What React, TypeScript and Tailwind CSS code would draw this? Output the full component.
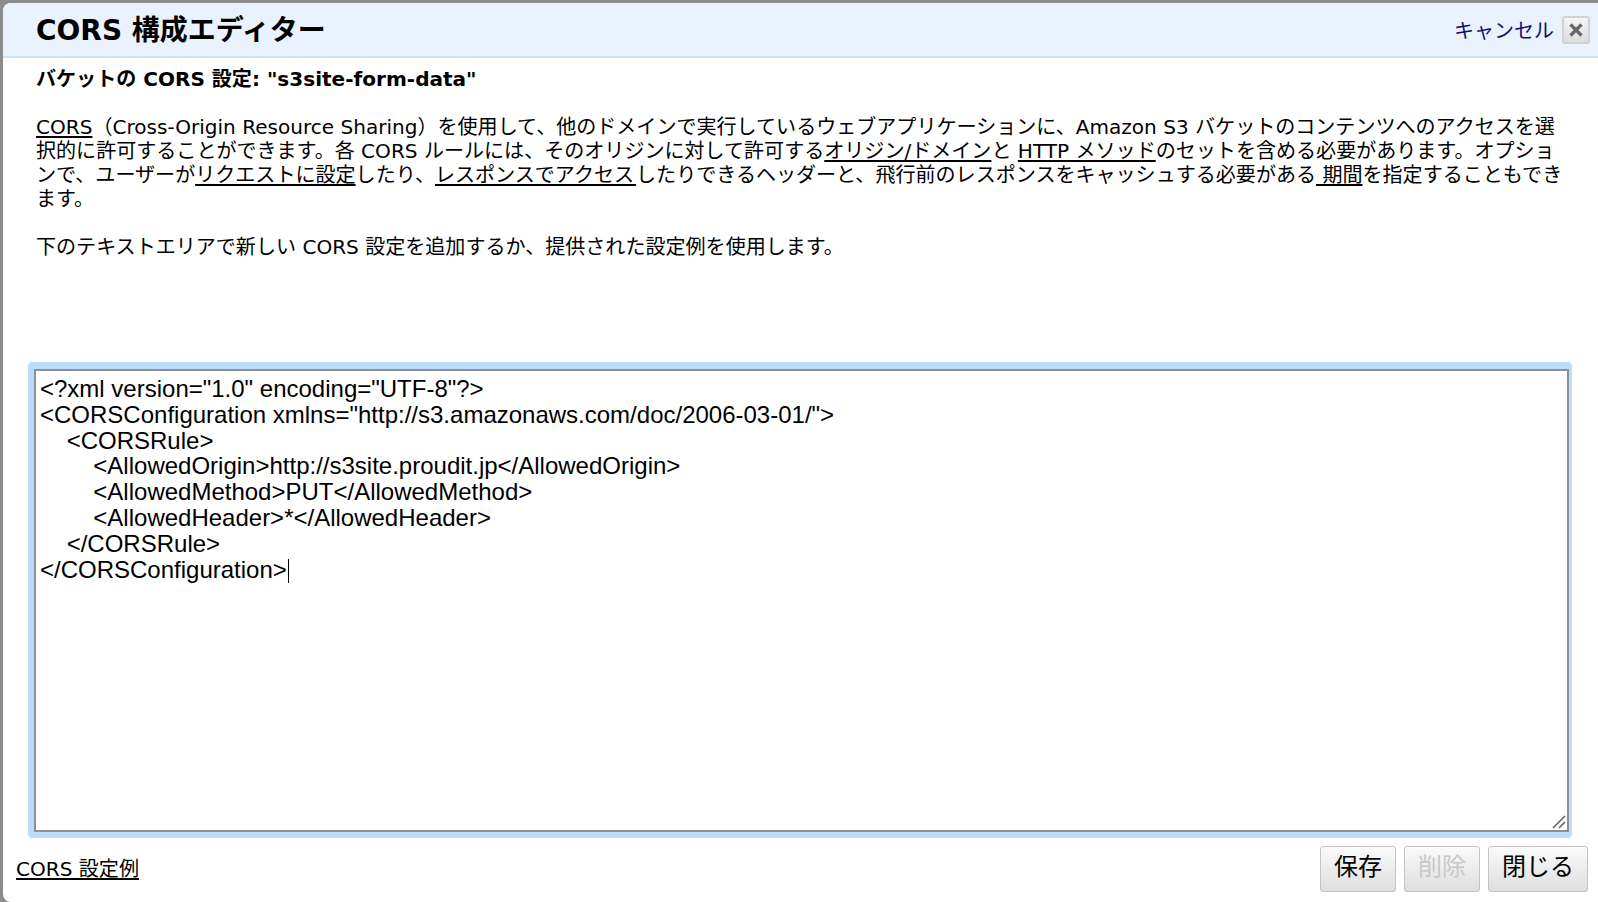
const latin = "font-['DejaVu_Sans','Noto_Sans_CJK_JP',sans-serif]";

const xmlLines = [
  '<?xml version="1.0" encoding="UTF-8"?>',
  '<CORSConfiguration xmlns="http://s3.amazonaws.com/doc/2006-03-01/">',
  '    <CORSRule>',
  '        <AllowedOrigin>http://s3site.proudit.jp</AllowedOrigin>',
  '        <AllowedMethod>PUT</AllowedMethod>',
  '        <AllowedHeader>*</AllowedHeader>',
  '    </CORSRule>',
  '</CORSConfiguration>',
];

function Btn({ label, width, disabled }: { label: string; width: string; disabled?: boolean }) {
  return (
    <button
      className={`${width} h-[46px] rounded-[3px] border border-[#c4c4c4] bg-gradient-to-b from-[#fbfbfb] to-[#dedede] pb-[4px] text-[24px] ${disabled ? "text-[#c8c8c8]" : "text-black"}`}
    >
      {label}
    </button>
  );
}

export default function App() {
  return (
    <div className={`h-[902px] w-full overflow-hidden bg-[#8c8c8c] pl-[3px] pt-[3px] text-black ${latin}`}>
      <div className="flex h-[899px] flex-col overflow-hidden rounded-l-[8px] bg-white">
        {/* header */}
        <div className="flex h-[55px] shrink-0 items-center justify-between border-b-2 border-[#cfe2f1] bg-[#e9f2fd] pl-[33px] pr-[8px]">
          <h1 className="pt-[3px] text-[28px] font-bold">CORS 構成エディター</h1>
          <div className="flex items-center gap-[8px]">
            <a className="pt-[3px] text-[20px] text-[#10106a]">キャンセル</a>
            <button className="flex h-[28px] w-[28px] items-center justify-center rounded-[3px] border-2 border-[#d2d2d2] bg-gradient-to-b from-[#f6f6f6] to-[#dcdcdc]">
              <svg width="16" height="16" viewBox="0 0 16 16">
                <path d="M2.5 2.5 L13.5 13.5 M13.5 2.5 L2.5 13.5" stroke="#666" strokeWidth="3.2" />
              </svg>
            </button>
          </div>
        </div>

        {/* description */}
        <div className="h-[304px] shrink-0 pl-[33px] pt-[9px] text-[20.06px] leading-[24px]">
          <p className="font-bold">バケットの CORS 設定: "s3site-form-data"</p>
          <p className="mt-[24px] whitespace-nowrap">
            <a className="underline">CORS</a>（Cross-Origin Resource Sharing）を使用して、他のドメインで実行しているウェブアプリケーションに、Amazon S3 バケットのコンテンツへのアクセスを選
            <br />
            択的に許可することができます。各 CORS ルールには、そのオリジンに対して許可する<a className="underline">オリジン/ドメイン</a>と <a className="underline">HTTP メソッド</a>のセットを含める必要があります。オプショ
            <br />
            ンで、ユーザーが<a className="underline">リクエストに設定</a>したり、<a className="underline">レスポンスでアクセス{"\u200A"}</a>したりできるヘッダーと、飛行前のレスポンスをキャッシュする必要がある<a className="underline"> 期間</a>を指定することもでき
            <br />
            ます。
          </p>
          <p className="mt-[24px]">下のテキストエリアで新しい CORS 設定を追加するか、提供された設定例を使用します。</p>
        </div>

        {/* editor */}
        <div className="ml-[25px] mr-[26px] h-[476px] shrink-0 rounded-[4px] bg-[#bcdcfb] pb-[6px] pl-[6px] pr-[3px] pt-[7px]">
          <div className="relative h-full border-2 border-[#8f8f8f] bg-white px-[4px] py-[5px] font-['Liberation_Sans',sans-serif] text-[24px] leading-[25.8px]">
            {xmlLines.map((line, i) => (
              <div key={i} className="whitespace-pre">
                {line}
                {i === xmlLines.length - 1 && <span className="ml-px inline-block h-[24px] w-px bg-black align-middle" />}
              </div>
            ))}
            <svg className="absolute bottom-0 right-0" width="16" height="16" viewBox="0 0 16 16">
              <path d="M2 14 L14 2 M8 14 L14 8" stroke="#666" strokeWidth="1.6" />
            </svg>
          </div>
        </div>

        {/* footer */}
        <div className="flex flex-1 items-start justify-between pl-[13px] pr-[10px] pt-[8px]">
          <a className="mt-[8px] text-[20.06px] underline">CORS 設定例</a>
          <div className="flex gap-[8px]">
            <Btn label="保存" width="w-[76px]" />
            <Btn label="削除" width="w-[76px]" disabled />
            <Btn label="閉じる" width="w-[100px]" />
          </div>
        </div>
      </div>
    </div>
  );
}
